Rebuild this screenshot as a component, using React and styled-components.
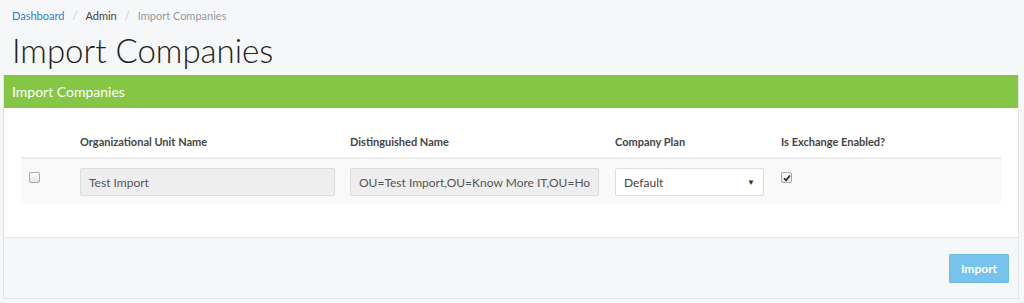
import React from "react";
import styled, { createGlobalStyle } from "styled-components";

const GlobalStyle = createGlobalStyle`
  html, body {
    margin: 0;
    padding: 0;
    background: #f6f7f9;
    font-family: "Lato", "Noto Sans", sans-serif;
    color: #333;
  }
`;

const Page = styled.div`
  padding: 0 5px 0 3px;
`;

const Breadcrumb = styled.ol`
  list-style: none;
  margin: 0;
  padding: 8px 0 0 9px;
  display: flex;
  align-items: center;
  font-size: 11px;
  height: 14px;

  li + li::before {
    content: "/";
    color: #ccc;
    padding: 0 8px;
  }
`;

const Crumb = styled.li`
  color: ${(p) => (p.active ? "#999" : p.link ? "#2f7dd1" : "#444")};
`;

const Title = styled.h1`
  margin: 0;
  padding: 7px 0 0 9px;
  height: 46px;
  font-size: 33px;
  font-weight: 300;
  color: #222;
  line-height: 42px;
`;

const Panel = styled.div`
  border: 1px solid #e2e4e7;
  border-top: none;
  background: #fff;
`;

const PanelHeading = styled.div`
  background: #85c744;
  color: #fff;
  height: 33px;
  padding: 0 8px;
  display: flex;
  align-items: center;
  font-size: 14px;
`;

const PanelBody = styled.div`
  padding: 19px 17px 33px 17px;
`;

const Table = styled.div`
  display: grid;
  grid-template-columns: 59px 270px 265px 166px 1fr;
`;

const HeadCell = styled.div`
  font-size: 11px;
  font-weight: 700;
  color: #444;
  height: 32px;
  padding-bottom: 2px;
  box-sizing: border-box;
  display: flex;
  align-items: center;
  border-bottom: 2px solid #ececec;
`;

const Cell = styled.div`
  background: #f9f9f9;
  height: 45px;
  display: flex;
  align-items: flex-start;
  padding-top: 9px;
  box-sizing: border-box;
`;

const Input = styled.input`
  box-sizing: border-box;
  width: ${(p) => p.w}px;
  height: 28px;
  border: 1px solid #ddd;
  border-radius: 2px;
  background: #eeeeee;
  font-family: inherit;
  font-size: 12px;
  color: #555;
  padding: 0 8px;
  outline: none;
`;

const Select = styled.div`
  box-sizing: border-box;
  width: 149px;
  height: 28px;
  border: 1px solid #ddd;
  border-radius: 2px;
  background: #fff;
  font-size: 12px;
  color: #444;
  padding: 0 8px;
  display: flex;
  align-items: center;
  justify-content: space-between;
`;

const Caret = styled.span`
  font-size: 8px;
  color: #333;
`;

const Check = styled.span`
  box-sizing: border-box;
  width: 11px;
  height: 11px;
  margin: 4px 0 0 ${(p) => p.ml || 0}px;
  border: 1px solid #aaa;
  border-radius: 2px;
  background: linear-gradient(#fdfdfd, #e6e6e6);
  display: flex;
  align-items: center;
  justify-content: center;
`;

const PanelFooter = styled.div`
  background: #f6f7f9;
  border-top: 1px solid #e2e4e7;
  height: 60px;
  display: flex;
  align-items: center;
  justify-content: flex-end;
  padding-right: 9px;
`;

const Button = styled.button`
  background: #76c4ed;
  border: 1px solid #6fbde6;
  color: #fff;
  font-family: inherit;
  font-size: 12px;
  font-weight: 700;
  width: 60px;
  height: 29px;
  border-radius: 1px;
`;

export default function App() {
  return (
    <Page>
      <GlobalStyle />
      <Breadcrumb>
        <Crumb link>Dashboard</Crumb>
        <Crumb>Admin</Crumb>
        <Crumb active>Import Companies</Crumb>
      </Breadcrumb>
      <Title>Import Companies</Title>
      <Panel>
        <PanelHeading>Import Companies</PanelHeading>
        <PanelBody>
          <Table>
            <HeadCell />
            <HeadCell>Organizational Unit Name</HeadCell>
            <HeadCell>Distinguished Name</HeadCell>
            <HeadCell>Company Plan</HeadCell>
            <HeadCell>Is Exchange Enabled?</HeadCell>

            <Cell>
              <Check ml={8} />
            </Cell>
            <Cell>
              <Input w={255} value="Test Import" readOnly />
            </Cell>
            <Cell>
              <Input w={249} value="OU=Test Import,OU=Know More IT,OU=Hosting,DC=knowmoreit,DC=com" readOnly />
            </Cell>
            <Cell>
              <Select>
                <span>Default</span>
                <Caret>▼</Caret>
              </Select>
            </Cell>
            <Cell>
              <Check>
                <svg width="8" height="8" viewBox="0 0 8 8">
                  <path d="M1 4.2 L3.1 6.3 L7 1.6" stroke="#222" strokeWidth="1.6" fill="none" />
                </svg>
              </Check>
            </Cell>
          </Table>
        </PanelBody>
        <PanelFooter>
          <Button>Import</Button>
        </PanelFooter>
      </Panel>
    </Page>
  );
}
